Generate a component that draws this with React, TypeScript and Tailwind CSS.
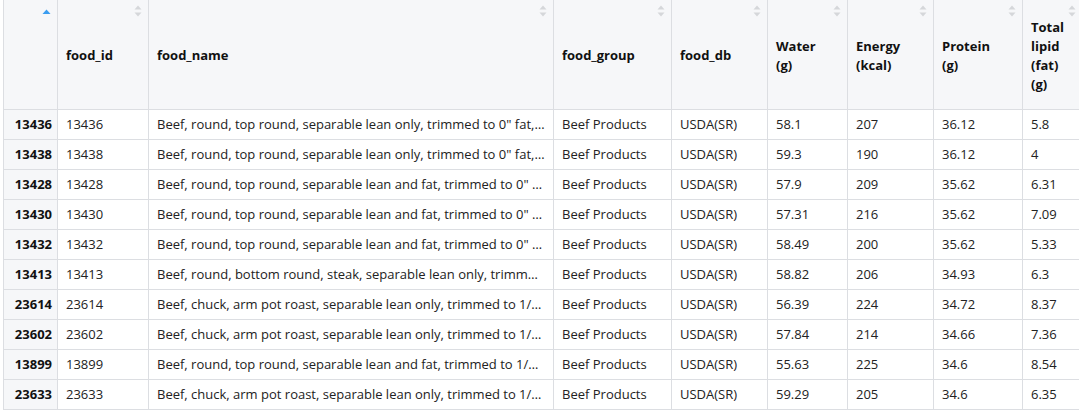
import React from "react";

type Row = {
  id: string;
  name: string;
  water: string;
  energy: string;
  protein: string;
  fat: string;
};

const rows: Row[] = [
  { id: "13436", name: 'Beef, round, top round, separable lean only, trimmed to 0" fat, select, cooked, braised', water: "58.1", energy: "207", protein: "36.12", fat: "5.8" },
  { id: "13438", name: 'Beef, round, top round, separable lean only, trimmed to 0" fat, choice, cooked, braised', water: "59.3", energy: "190", protein: "36.12", fat: "4" },
  { id: "13428", name: 'Beef, round, top round, separable lean and fat, trimmed to 0" fat, all grades, cooked, braised', water: "57.9", energy: "209", protein: "35.62", fat: "6.31" },
  { id: "13430", name: 'Beef, round, top round, separable lean and fat, trimmed to 0" fat, choice, cooked, braised', water: "57.31", energy: "216", protein: "35.62", fat: "7.09" },
  { id: "13432", name: 'Beef, round, top round, separable lean and fat, trimmed to 0" fat, select, cooked, braised', water: "58.49", energy: "200", protein: "35.62", fat: "5.33" },
  { id: "13413", name: 'Beef, round, bottom round, steak, separable lean only, trimmed to 0" fat, all grades, cooked, braised', water: "58.82", energy: "206", protein: "34.93", fat: "6.3" },
  { id: "23614", name: 'Beef, chuck, arm pot roast, separable lean only, trimmed to 1/8" fat, choice, cooked, braised', water: "56.39", energy: "224", protein: "34.72", fat: "8.37" },
  { id: "23602", name: 'Beef, chuck, arm pot roast, separable lean only, trimmed to 1/8" fat, all grades, cooked, braised', water: "57.84", energy: "214", protein: "34.66", fat: "7.36" },
  { id: "13899", name: 'Beef, round, top round, separable lean and fat, trimmed to 1/8" fat, prime, cooked, braised', water: "55.63", energy: "225", protein: "34.6", fat: "8.54" },
  { id: "23633", name: 'Beef, chuck, arm pot roast, separable lean only, trimmed to 1/8" fat, select, cooked, braised', water: "59.29", energy: "205", protein: "34.6", fat: "6.35" },
];

function SortIcon({ active }: { active?: boolean }) {
  if (active) {
    return (
      <svg width="9" height="6" viewBox="0 0 9 6" className="absolute right-[6px] top-[9px]">
        <polygon points="4.5,0.5 8.5,5 0.5,5" fill="#3a9df0" />
      </svg>
    );
  }
  return (
    <svg width="8" height="12" viewBox="0 0 8 12" className="absolute right-[6px] top-[5px]">
      <polygon points="4,0.5 7.5,4.5 0.5,4.5" fill="#d5d7da" />
      <polygon points="4,11.5 7.5,7.5 0.5,7.5" fill="#d5d7da" />
    </svg>
  );
}

const headers: { label: string; w: string }[] = [
  { label: "food_id", w: "w-[91px]" },
  { label: "food_name", w: "w-[405px]" },
  { label: "food_group", w: "w-[118px]" },
  { label: "food_db", w: "w-[96px]" },
  { label: "Water (g)", w: "w-[80px]" },
  { label: "Energy (kcal)", w: "w-[86px]" },
  { label: "Protein (g)", w: "w-[89px]" },
  { label: "Total lipid (fat) (g)", w: "w-[60px]" },
];

const cell = "border-x border-b border-[#dcdee2] px-2";

export default function App() {
  return (
    <div className="w-[1079px] h-[417px] overflow-hidden bg-white pl-[3px] font-['Open_Sans','Segoe_UI',sans-serif] text-[13px] text-[#222]">
      <table className="table-fixed border-collapse w-[1079px]">
        <colgroup>
          <col className="w-[54px]" />
          {headers.map((h, i) => (
            <col key={i} className={h.w} />
          ))}
        </colgroup>
        <thead>
          <tr className="h-[109px] bg-[#f6f7f9]">
            <th className="relative border-x border-b border-[#dcdee2] align-middle">
              <SortIcon active />
            </th>
            {headers.map((h, i) => (
              <th
                key={i}
                className="relative border-x border-b border-[#dcdee2] pl-2 pr-[22px] pt-[3px] text-left align-middle font-bold leading-[19px] text-[#111]"
              >
                {h.label}
                <SortIcon />
              </th>
            ))}
          </tr>
        </thead>
        <tbody>
          {rows.map((r) => (
            <tr key={r.id} className="h-[30px]">
              <td className="border-x border-b border-[#dcdee2] bg-[#f6f7f9] pr-[5px] pt-[2px] text-right font-bold text-[#111]">
                {r.id}
              </td>
              <td className={`${cell} pt-[2px]`}>{r.id}</td>
              <td className={`${cell} pt-[2px] truncate`}>{r.name}</td>
              <td className={`${cell} pt-[2px]`}>Beef Products</td>
              <td className={`${cell} pt-[2px]`}>USDA(SR)</td>
              <td className={`${cell} pt-[2px]`}>{r.water}</td>
              <td className={`${cell} pt-[2px]`}>{r.energy}</td>
              <td className={`${cell} pt-[2px]`}>{r.protein}</td>
              <td className={`${cell} pt-[2px]`}>{r.fat}</td>
            </tr>
          ))}
        </tbody>
      </table>
    </div>
  );
}
